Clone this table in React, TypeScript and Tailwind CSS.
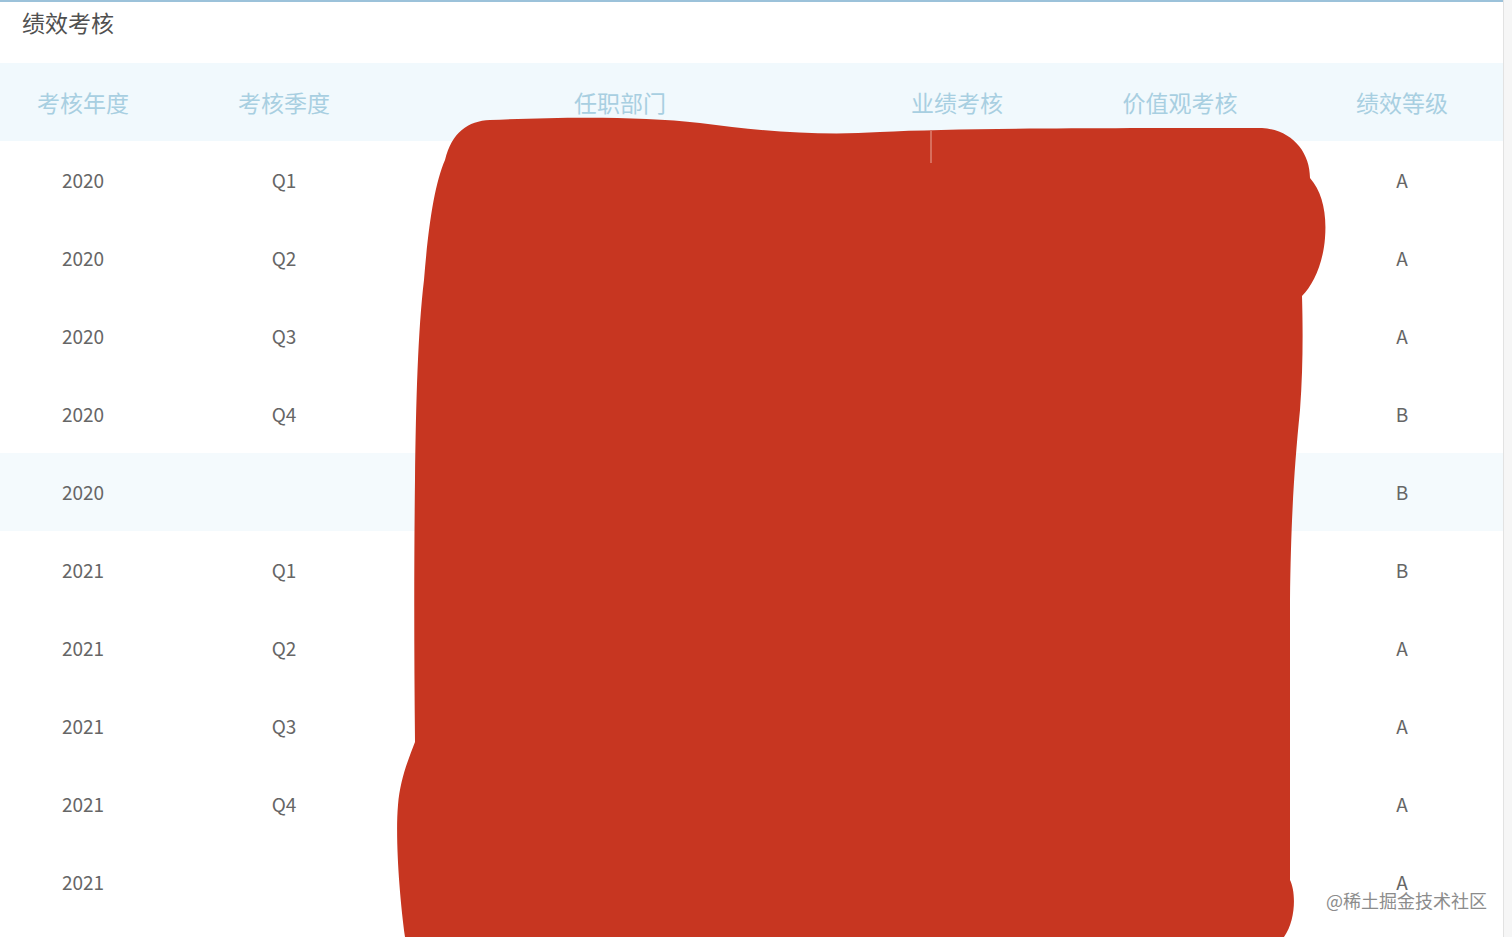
import React from 'react';

const font = { fontFamily: '"Noto Sans CJK SC", "Noto Sans", sans-serif' };

const columns = ['考核年度', '考核季度', '任职部门', '业绩考核', '价值观考核', '绩效等级'];
const widths = ['w-[166px]', 'w-[236px]', 'w-[436px]', 'w-[238px]', 'w-[208px]', 'w-[236px]'];

const rows = [
  { year: '2020', quarter: 'Q1', grade: 'A' },
  { year: '2020', quarter: 'Q2', grade: 'A' },
  { year: '2020', quarter: 'Q3', grade: 'A' },
  { year: '2020', quarter: 'Q4', grade: 'B' },
  { year: '2020', quarter: '', grade: 'B' },
  { year: '2021', quarter: 'Q1', grade: 'B' },
  { year: '2021', quarter: 'Q2', grade: 'A' },
  { year: '2021', quarter: 'Q3', grade: 'A' },
  { year: '2021', quarter: 'Q4', grade: 'A' },
  { year: '2021', quarter: '', grade: 'A' },
];

function Scribble() {
  return (
    <svg className="absolute left-0 top-0 pointer-events-none" width="1512" height="937" viewBox="0 0 1512 937">
      <path
        fill="#c73621"
        d="M445 160 C452 132 468 121 490 120 C560 117 640 116 700 123 C760 131 820 136 880 132 C960 128 1100 128 1262 128 C1292 130 1310 152 1310 178 C1322 192 1327 212 1325 238 C1323 264 1313 285 1302 296 C1303 330 1303 370 1300 410 C1294 470 1291 520 1290 600 L1290 880 C1296 892 1296 920 1284 937 L405 937 C400 900 395 840 398 805 C400 780 408 760 415 742 C414 650 414 560 415 480 C416 400 418 330 424 280 C428 230 434 185 445 160 Z"
      />
      <line x1="931" y1="131" x2="931" y2="163" stroke="#e8a699" strokeWidth="1" />
    </svg>
  );
}

export default function App() {
  return (
    <div className="relative w-[1512px] h-[937px] overflow-hidden bg-white flex" style={font}>
      <div className="w-[1503px] shrink-0 border-t-2 border-[#9cc2da]">
        <div className="h-[61px] pl-[22px] pt-[4px] text-[23px] leading-[32px] text-[#505050]">绩效考核</div>

        <div className="h-[78px] flex items-center bg-[#f1f9fd] text-[23px] text-[#a8cfe1]">
          {columns.map((c, i) => (
            <div key={c} className={`${widths[i]} shrink-0 text-center`}>{c}</div>
          ))}
        </div>

        {rows.map((r, i) => (
          <div
            key={i}
            className={`h-[78px] flex items-center text-[19px] text-[#666666] ${i === 4 ? 'bg-[#f4fafd]' : 'bg-white'}`}
          >
            <div className={`${widths[0]} shrink-0 text-center`}>{r.year}</div>
            <div className={`${widths[1]} shrink-0 text-center`}>{r.quarter}</div>
            <div className={`${widths[2]} shrink-0`}></div>
            <div className={`${widths[3]} shrink-0`}></div>
            <div className={`${widths[4]} shrink-0`}></div>
            <div className={`${widths[5]} shrink-0 text-center`}>{r.grade}</div>
          </div>
        ))}
      </div>

      <div className="w-[9px] shrink-0 border-l border-[#e2e2e2] bg-[#f6f6f6]" />

      <Scribble />

      <div
        className="absolute left-[1326px] top-[887px] text-[18px] leading-[26px] text-[#8c8c8c]"
        style={{ textShadow: '0 0 2px #fff, 0 0 2px #fff' }}
      >
        @稀土掘金技术社区
      </div>
    </div>
  );
}
